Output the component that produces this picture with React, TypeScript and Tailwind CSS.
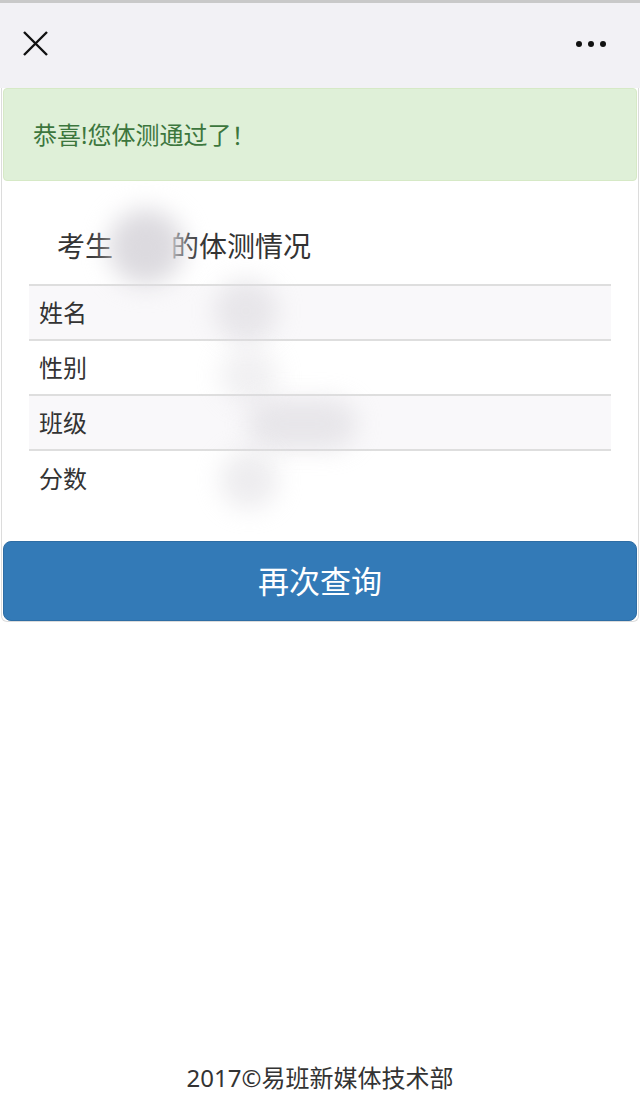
import React from 'react';

const rows = ['姓名', '性别', '班级', '分数'];

// blurred-out personal data smudges
const Blur: React.FC<{ className: string }> = ({ className }) => (
  <div className={`absolute rounded-full bg-[#dcdadf] blur-[12px] ${className}`} />
);

export default function App() {
  return (
    <div
      className="min-h-[1100px] flex flex-col bg-white text-[#333]"
      style={{ fontFamily: '"Noto Sans", "Noto Sans CJK SC", sans-serif' }}
    >
      {/* top bar */}
      <div className="h-[88px] border-t-[3px] border-[#c9c9c9] bg-[#f2f1f5] flex items-center justify-between pl-[22px] pr-[34px]">
        <svg width="27" height="27" viewBox="0 0 27 27" className="mt-[-4px]">
          <path d="M2 2 L25 25 M25 2 L2 25" stroke="#111" strokeWidth="2.4" />
        </svg>
        <div className="flex gap-[6px] mt-[-4px]">
          <span className="w-[6px] h-[6px] rounded-full bg-[#111]" />
          <span className="w-[6px] h-[6px] rounded-full bg-[#111]" />
          <span className="w-[6px] h-[6px] rounded-full bg-[#111]" />
        </div>
      </div>

      <div className="mx-[1px] border border-[#dcdcdc] border-t-0 rounded-b-[6px]">
        {/* alert */}
        <div className="mx-[1px] h-[93px] bg-[#dff0d8] border border-[#d6e9c6] rounded-[4px] flex items-center px-[29px] text-[24px] text-[#3c763d]">
          恭喜!您体测通过了<span className="font-['Noto_Sans_CJK_SC']">！</span>
        </div>

        {/* result */}
        <div className="relative px-[27px] pb-[35px]">
          <div className="pl-[28px] pt-[51px] pb-[24px] text-[28px] leading-[28px] flex">
            考生<span className="inline-block w-[58px]" />的体测情况
          </div>
          <div className="border-t-2 border-[#dedede]">
            {rows.map((r, i) => (
              <div
                key={r}
                className={`h-[55px] flex items-center pl-[10px] text-[24px] border-b-2 border-[#dedede] last:border-b-0 ${
                  i % 2 === 0 ? 'bg-[#f9f8fa]' : 'bg-white'
                }`}
              >
                {r}
              </div>
            ))}
          </div>
          <Blur className="left-[106px] top-[28px] w-[76px] h-[76px]" />
          <Blur className="left-[212px] top-[98px] w-[64px] h-[64px] opacity-60" />
          <Blur className="left-[218px] top-[168px] w-[58px] h-[54px] opacity-40" />
          <Blur className="left-[245px] top-[218px] w-[110px] h-[50px] opacity-60" />
          <Blur className="left-[218px] top-[270px] w-[58px] h-[58px] opacity-50" />
        </div>

        {/* button */}
        <button className="mx-[1px] w-[calc(100%-2px)] h-[80px] bg-[#337ab7] border border-[#2e6da4] rounded-[8px] text-white text-[31px] flex items-center justify-center">
          再次查询
        </button>
      </div>

      <div className="mt-auto pb-[4px] text-center text-[24px] leading-[36px] text-[#333]">
        2017©易班新媒体技术部
      </div>
    </div>
  );
}
